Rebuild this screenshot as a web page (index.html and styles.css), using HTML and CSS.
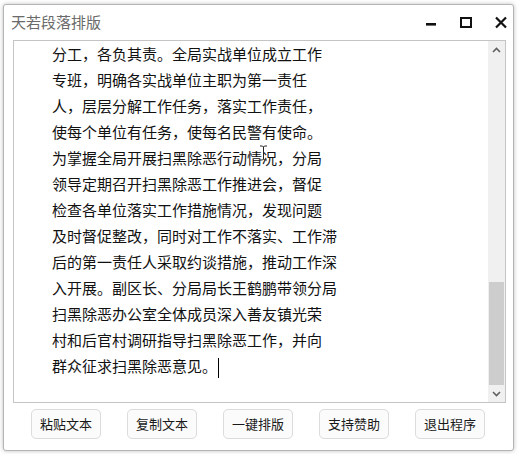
FILE: index.html
```html
<!DOCTYPE html>
<html lang="zh">
<head>
<meta charset="utf-8">
<title>天若段落排版</title>
<link rel="stylesheet" href="styles.css">
</head>
<body>
<div class="window">
  <div class="titlebar">
    <div class="title">天若段落排版</div>
    <div class="controls">
      <svg class="ctl" width="14" height="14" viewBox="0 0 14 14"><rect x="2" y="7" width="10" height="2.6" fill="#111"/></svg>
      <svg class="ctl" width="14" height="14" viewBox="0 0 14 14"><rect x="2" y="2" width="10" height="9" fill="none" stroke="#111" stroke-width="2"/></svg>
      <svg class="ctl" width="14" height="14" viewBox="0 0 14 14"><path d="M2 1.5 L12 11.5 M12 1.5 L2 11.5" stroke="#111" stroke-width="2.2" fill="none"/></svg>
    </div>
  </div>
  <div class="editor">
    <div class="content">
      <div class="line">分工，各负其责。全局实战单位成立工作</div>
      <div class="line">专班，明确各实战单位主职为第一责任</div>
      <div class="line">人，层层分解工作任务，落实工作责任，</div>
      <div class="line">使每个单位有任务，使每名民警有使命。</div>
      <div class="line">为掌握全局开展扫黑除恶行动情况，分局</div>
      <div class="line">领导定期召开扫黑除恶工作推进会，督促</div>
      <div class="line">检查各单位落实工作措施情况，发现问题</div>
      <div class="line">及时督促整改，同时对工作不落实、工作滞</div>
      <div class="line">后的第一责任人采取约谈措施，推动工作深</div>
      <div class="line">入开展。副区长、分局局长王鹤鹏带领分局</div>
      <div class="line">扫黑除恶办公室全体成员深入善友镇光荣</div>
      <div class="line">村和后官村调研指导扫黑除恶工作，并向</div>
      <div class="line">群众征求扫黑除恶意见。<span class="caret"></span></div>
      <svg class="ibeam" width="9" height="16" viewBox="0 0 9 16"><path d="M1 1 H3.5 L4.5 2 L5.5 1 H8 M4.5 2 V14 M1 15 H3.5 L4.5 14 L5.5 15 H8" stroke="#222" stroke-width="1" fill="none"/></svg>
    </div>
    <div class="scrollbar">
      <div class="arrow">
        <svg width="9" height="6" viewBox="0 0 9 6"><path d="M1 5 L4.5 1.5 L8 5" stroke="#606060" stroke-width="1.6" fill="none"/></svg>
      </div>
      <div class="track"></div>
      <div class="thumb"></div>
      <div class="arrow">
        <svg width="9" height="6" viewBox="0 0 9 6"><path d="M1 1 L4.5 4.5 L8 1" stroke="#606060" stroke-width="1.6" fill="none"/></svg>
      </div>
    </div>
  </div>
  <div class="buttons">
    <button class="btn">粘贴文本</button>
    <button class="btn">复制文本</button>
    <button class="btn">一键排版</button>
    <button class="btn">支持赞助</button>
    <button class="btn">退出程序</button>
  </div>
</div>
</body>
</html>
```
FILE: styles.css
```css
html, body {
  margin: 0;
  padding: 0;
  background: #ffffff;
}
body {
  width: 519px;
  height: 454px;
  overflow: hidden;
  font-family: "Noto Sans CJK SC", "Noto Sans", sans-serif;
}
.window {
  margin: 4px 0 0 3px;
  width: 511px;
  height: 447px;
  box-sizing: border-box;
  border: 1px solid #b4b4b4;
  border-radius: 3px;
  background: #fff;
  box-shadow: 0 0 4px rgba(0, 0, 0, 0.25);
  display: flex;
  flex-direction: column;
}
.titlebar {
  height: 35px;
  display: flex;
  align-items: center;
  justify-content: space-between;
  padding: 0 5px 0 7px;
}
.title {
  font-size: 15px;
  color: #6a6a6a;
  line-height: 20px;
  margin-top: -1px;
}
.controls {
  display: flex;
  align-items: center;
  gap: 21px;
  margin-top: 1px;
}
.ctl {
  display: block;
}
.editor {
  margin: 0 7px 0 9px;
  height: 363px;
  box-sizing: border-box;
  border: 1px solid #c4c4c4;
  display: flex;
}
.content {
  flex: 1;
  position: relative;
  padding: 0 0 0 38px;
  font-size: 15px;
  line-height: 26px;
  color: #111;
}
.line {
  white-space: nowrap;
  height: 26px;
}
.caret {
  display: inline-block;
  width: 1px;
  height: 20px;
  background: #000;
  vertical-align: middle;
  margin-left: 1px;
}
.ibeam {
  position: absolute;
  left: 245px;
  top: 104px;
}
.scrollbar {
  width: 17px;
  background: #f0f0f0;
  display: flex;
  flex-direction: column;
}
.arrow {
  height: 17px;
  display: flex;
  align-items: center;
  justify-content: center;
}
.track {
  flex: 1;
}
.thumb {
  height: 103px;
  margin: 0 1px;
  background: #cdcdcd;
}
.buttons {
  display: flex;
  gap: 26px;
  padding: 6px 0 0 27px;
}
.btn {
  width: 70px;
  height: 30px;
  box-sizing: border-box;
  border: 1px solid #dcdcdc;
  border-radius: 5px;
  background: #fbfbfb;
  font-family: "Noto Sans CJK SC", "Noto Sans", sans-serif;
  font-size: 13px;
  color: #1a1a1a;
  padding: 0;
  line-height: 28px;
}
```
